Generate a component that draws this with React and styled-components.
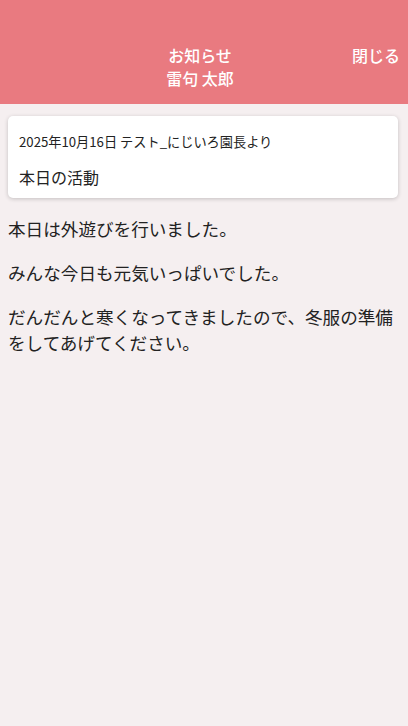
import React from 'react'
import styled, { createGlobalStyle } from 'styled-components'

const GlobalStyle = createGlobalStyle`
    html, body {
        margin: 0;
        padding: 0;
        background: #f5eff0;
    }
    body {
        font-family: "Noto Sans CJK JP", "Noto Sans", sans-serif;
        color: #222;
    }
`

const notice = {
    date: '2025年10月16日',
    author: 'テスト_にじいろ園長より',
    title: '本日の活動',
    body: [
        '本日は外遊びを行いました。',
        'みんな今日も元気いっぱいでした。',
        'だんだんと寒くなってきましたので、冬服の準備をしてあげてください。',
    ],
}

function App() {
    return (
        <Page>
            <GlobalStyle />
            <Header>
                <Spacer />
                <Title>
                    <div>お知らせ</div>
                    <div>雷句 太郎</div>
                </Title>
                <CloseButton type="button">閉じる</CloseButton>
            </Header>
            <Content>
                <Card>
                    <Meta>{notice.date} {notice.author}</Meta>
                    <CardTitle>{notice.title}</CardTitle>
                </Card>
                {notice.body.map((text, i) => (
                    <Paragraph key={i}>{text}</Paragraph>
                ))}
            </Content>
        </Page>
    )
}

const Page = styled.div`
    min-height: 726px;
    background: #f5eff0;
`
const Header = styled.header`
    height: 104px;
    box-sizing: border-box;
    padding: 44px 8px 0 0;
    background: #e97a80;
    color: #fff;
    display: grid;
    grid-template-columns: 1fr auto 1fr;
    align-items: start;
`
const Spacer = styled.div``

const Title = styled.div`
    text-align: center;
    font-size: 16px;
    line-height: 23px;
    font-weight: 500;
`
const CloseButton = styled.button`
    justify-self: end;
    border: none;
    background: none;
    padding: 0;
    color: #fff;
    font-family: inherit;
    font-size: 16px;
    line-height: 23px;
    font-weight: 500;
    cursor: pointer;
`
const Content = styled.main`
    padding: 12px 8px;
`
const Card = styled.div`
    margin-right: 2px;
    background: #fff;
    border-radius: 5px;
    box-shadow: 0 1px 4px rgba(0, 0, 0, 0.2);
    padding: 16px 11px 9px;
`
const Meta = styled.div`
    font-size: 13.2px;
    line-height: 20px;
`
const CardTitle = styled.div`
    margin-top: 13px;
    font-size: 16px;
    line-height: 24px;
`
const Paragraph = styled.p`
    margin: 17.6px 0;
    font-size: 17.6px;
    line-height: 1.5;
`

export default App
